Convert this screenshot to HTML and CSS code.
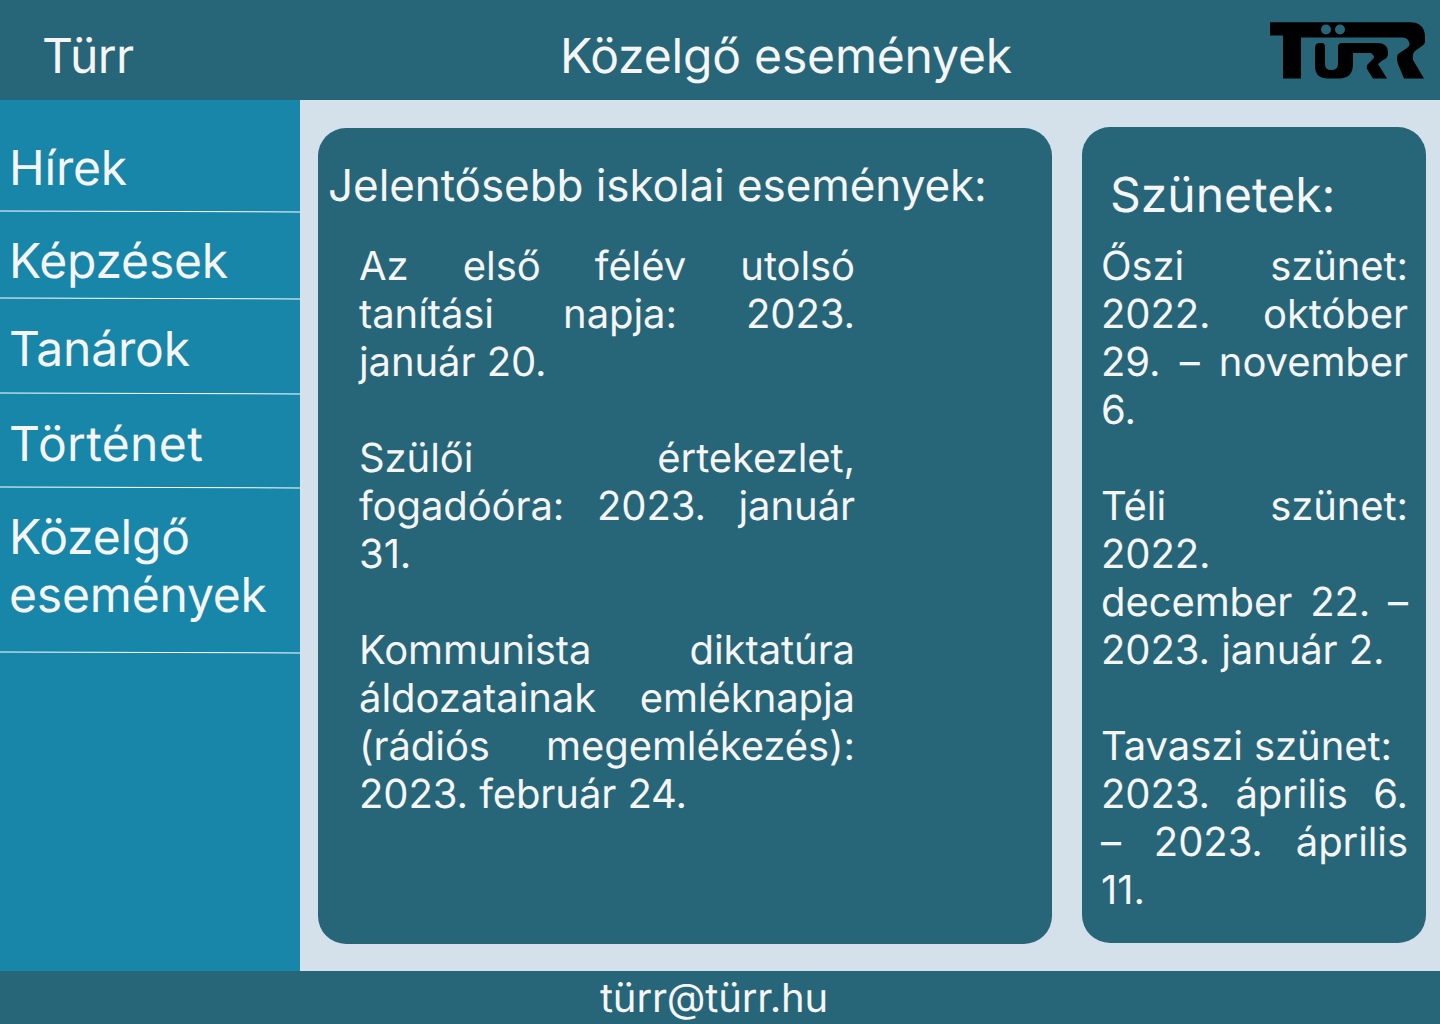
FILE: index.html
```html
<!DOCTYPE html>
<html lang="hu">
<head>
<meta charset="utf-8">
<title>Közelgő események</title>
<link rel="stylesheet" href="styles.css">
</head>
<body>
<header class="top">
  <div class="brand">Türr</div>
  <h1 class="page-title">Közelgő események</h1>
  <svg class="logo" viewBox="1270 22 156 57" aria-label="Türr logó">
    <path fill="#000" d="M1270 22.300H1410Q1424 22.300 1425 36V42Q1425 44 1422 46L1415 51Q1412 54 1413 60L1424 78.500H1404L1398 64Q1396 58 1398 54L1407 48Q1411 45 1409 42Q1408 38 1403 37.500H1301V78.500H1283V35.500H1270Z"/>
    <circle class="logo-dot" cx="1326" cy="29.500" r="5"/>
    <circle class="logo-dot" cx="1340" cy="29.500" r="5"/>
    <path fill="#000" d="M1315 48Q1315 43 1320 43H1322Q1325 43 1325 47V64Q1325 70 1331 70Q1338 70 1338 64V47Q1338 43 1342 43H1377Q1388 43 1388 52V54Q1388 58 1383 60L1378 64L1387 78.500H1373L1367 69Q1366 65 1369 63L1373 59Q1375 57 1373 55Q1372 53 1370 53H1353V64Q1353 78.500 1339 78.500H1328Q1315 78.500 1315 66Z"/>
  </svg>
</header>
<div class="middle">
  <nav class="side">
    <a class="nav-item nav-a">Hírek</a>
    <a class="nav-item nav-b">Képzések</a>
    <a class="nav-item nav-c">Tanárok</a>
    <a class="nav-item nav-d">Történet</a>
    <a class="nav-item nav-e">Közelgő események</a>
  </nav>
  <main class="content">
    <section class="card card-main">
      <h2 class="main-heading">Jelentősebb iskolai események:</h2>
      <p class="events">Az első félév utolsó tanítási napja: 2023. január 20.<br><br>Szülői értekezlet, fogadóóra: 2023. január 31.<br><br>Kommunista diktatúra áldozatainak emléknapja (rádiós megemlékezés): 2023. február 24.</p>
    </section>
    <section class="card card-side">
      <h2 class="side-heading">Szünetek:</h2>
      <p class="breaks">Őszi szünet: 2022. október 29. – november 6.<br><br>Téli szünet: 2022. december 22. – 2023. január 2.<br><br>Tavaszi szünet:<br>2023. április 6. – 2023. április 11.</p>
    </section>
  </main>
</div>
<footer class="bottom">türr@türr.hu</footer>
</body>
</html>
```
FILE: styles.css
```css
* { box-sizing: border-box; }
html, body { margin: 0; height: 100%; }
body {
  width: 1440px;
  height: 1024px;
  display: flex;
  flex-direction: column;
  overflow: hidden;
  font-family: Inter, "Liberation Sans", sans-serif;
  font-weight: 400;
  text-rendering: geometricPrecision;
  color: #f5f5f5;
  background: #d4e0ea;
}
.top {
  height: 100px;
  flex: none;
  display: flex;
  align-items: center;
  background: #276579;
  padding: 0 14px 0 42px;
}
.brand { width: 258px; font-size: 48px; padding-top: 10px; letter-spacing: -0.6px; }
.page-title {
  margin: 0 0 0 260px;
  padding-top: 10px;
  font-size: 48px;
  font-weight: 400;
  letter-spacing: -0.18px;
  flex: 1;
}
.logo { width: 156px; height: 57px; flex: none; margin-top: 1px; }
.logo-dot { fill: #276579; }
.middle { flex: 1; display: flex; min-height: 0; }
.side {
  width: 300px;
  flex: none;
  background: #1786a9;
  padding-top: 39px;
}
.nav-item {
  display: block;
  position: relative;
  padding-left: 9px;
  font-size: 48px;
  line-height: 58px;
  letter-spacing: -0.18px;
}
.nav-item::after {
  content: "";
  position: absolute;
  left: 0;
  right: 0;
  bottom: 0;
  height: 1px;
  background: #fff;
  transform: rotate(0.19deg);
}
.nav-a { padding-bottom: 15px; }
.nav-b { padding-top: 20px; padding-bottom: 9px; }
.nav-c { padding-top: 21px; padding-bottom: 16px; }
.nav-d { padding-top: 21px; padding-bottom: 15px; letter-spacing: 0.35px; }
.nav-e { padding-top: 20px; padding-bottom: 29px; }
.content { flex: 1; display: flex; padding: 27px 14px 0 18px; gap: 30px; align-items: flex-start; }
.card { background: #276579; border-radius: 28px; height: 816px; }
.card-main { width: 734px; margin-top: 1px; padding: 30px 197px 0 41px; }
.card-side { width: 344px; padding: 39px 18px 0 19px; }
.main-heading {
  margin: 0 0 30px -31px;
  font-size: 44px;
  line-height: 54px;
  font-weight: 400;
  letter-spacing: -0.07px;
  white-space: nowrap;
}
.side-heading {
  margin: 0 0 18px 9px;
  font-size: 48px;
  line-height: 58px;
  font-weight: 400;
}
.events, .breaks {
  margin: 0;
  font-size: 40px;
  line-height: 48px;
  letter-spacing: -0.08px;
  text-align: justify;
}
.bottom {
  height: 53px;
  flex: none;
  background: #276579;
  text-align: center;
  font-size: 40px;
  line-height: 53px;
  letter-spacing: -0.15px;
  padding-right: 12px;
}
```
